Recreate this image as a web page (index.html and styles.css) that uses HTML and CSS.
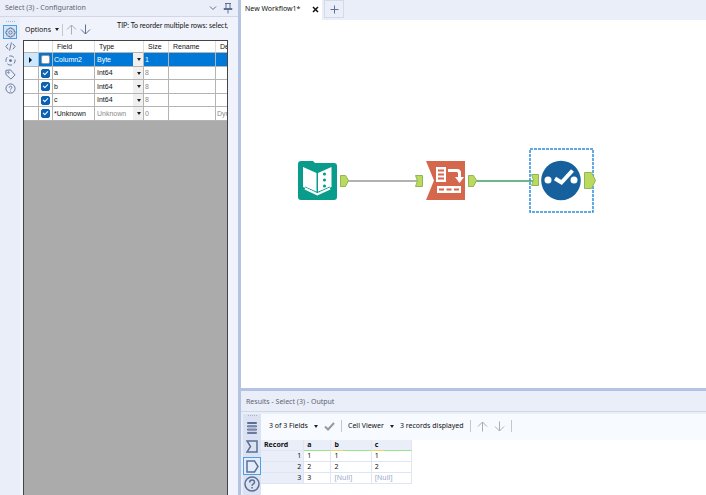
FILE: index.html
```html
<!DOCTYPE html>
<html lang="en">
<head>
    <meta charset="UTF-8">
    <meta name="viewport" content="width=device-width, initial-scale=1.0">
    <title>New Workflow1*</title>
    <link rel="stylesheet" href="styles.css">
</head>
<body>
    <div class="app">
        <aside class="config">
            <header class="config-title">
                <span>Select (3) - Configuration</span>
                <button class="icon-btn" aria-label="Window menu">
                    <svg width="8" height="8" viewBox="0 0 8 8"><path d="M1 2.5l3 3 3-3"/></svg>
                </button>
                <button class="icon-btn" aria-label="Pin">
                    <svg width="10" height="12" viewBox="0 0 10 12"><path d="M2 1.5h6M3 1.5V6M7 1.5V6M1 7.500V6.500h8v1zM5 8v3.5"/></svg>
                </button>
            </header>
            <div class="config-body">
                <nav class="config-nav">
                    <span class="grip"></span>
                    <button class="active" aria-label="Configuration">
                        <svg width="11" height="11" viewBox="0 0 12 12"><path d="M5 1h2l.5 1.4 1.3-.5 1.4 1.4-.6 1.3L11 5v2l-1.4.5.6 1.3-1.4 1.4-1.3-.6L7 11H5l-.5-1.4-1.3.6-1.4-1.4.6-1.3L1 7V5l1.4-.4-.6-1.3 1.4-1.4 1.3.5z"/><circle cx="6" cy="6" r="1.8"/></svg>
                    </button>
                    <button aria-label="XML view">
                        <svg width="11" height="11" viewBox="0 0 12 12"><path d="M3.5 3L1 6l2.5 3M8.5 3L11 6 8.5 9M7 1.5l-2 9"/></svg>
                    </button>
                    <button aria-label="Navigation">
                        <svg width="11" height="11" viewBox="0 0 12 12"><circle cx="6" cy="6" r="5" stroke-dasharray="5.5 2.35" stroke-dashoffset="2"/><circle class="dot" cx="6" cy="6" r="1.5"/></svg>
                    </button>
                    <button aria-label="Annotation">
                        <svg width="11" height="11" viewBox="0 0 12 12"><path d="M1 1.5L6 1l5 5.5L6.5 11 1 6z"/><circle cx="3.8" cy="3.8" r=".8"/></svg>
                    </button>
                    <button aria-label="Help">
                        <svg width="11" height="11" viewBox="0 0 12 12"><circle cx="6" cy="6" r="5"/><path d="M4.5 5c0-2 3-2 3-.2C7.5 6 6 6 6 7.2M6 8.3v1"/></svg>
                    </button>
                </nav>
                <div class="config-main">
                    <div class="options-bar">
                        <button class="menu-btn">Options</button>
                        <span class="bar"></span>
                        <button class="icon-btn dim" aria-label="Move up">
                            <svg width="11" height="11" viewBox="0 0 11 11"><path d="M5.5 10.5V1M1 5.5L5.5 1 10 5.5"/></svg>
                        </button>
                        <button class="icon-btn" aria-label="Move down">
                            <svg width="11" height="11" viewBox="0 0 11 11"><path d="M5.5 .5V10M1 5.5L5.5 10 10 5.5"/></svg>
                        </button>
                        <span class="tip">TIP: To reorder multiple rows: select, right-click</span>
                    </div>
                    <div class="grid-box">
                        <table class="fields">
                            <colgroup>
                                <col class="w-mark"><col class="w-check"><col class="w-field"><col class="w-type"><col class="w-size"><col class="w-rename"><col class="w-desc">
                            </colgroup>
                            <thead>
                                <tr><th></th><th></th><th>Field</th><th>Type</th><th>Size</th><th>Rename</th><th>Description</th></tr>
                            </thead>
                            <tbody>
                                <tr class="selected">
                                    <td class="mark"></td>
                                    <td class="check"><input type="checkbox" aria-label="Column2"></td>
                                    <td>Column2</td>
                                    <td class="type"><div class="pick"><select aria-label="Type of Column2"><option>Byte</option></select></div></td>
                                    <td>1</td><td></td><td></td>
                                </tr>
                                <tr>
                                    <td></td>
                                    <td class="check"><input type="checkbox" aria-label="a" checked></td>
                                    <td>a</td>
                                    <td class="type"><div class="pick"><select aria-label="Type of a"><option>Int64</option></select></div></td>
                                    <td class="muted">8</td><td></td><td></td>
                                </tr>
                                <tr>
                                    <td></td>
                                    <td class="check"><input type="checkbox" aria-label="b" checked></td>
                                    <td>b</td>
                                    <td class="type"><div class="pick"><select aria-label="Type of b"><option>Int64</option></select></div></td>
                                    <td class="muted">8</td><td></td><td></td>
                                </tr>
                                <tr>
                                    <td></td>
                                    <td class="check"><input type="checkbox" aria-label="c" checked></td>
                                    <td>c</td>
                                    <td class="type"><div class="pick"><select aria-label="Type of c"><option>Int64</option></select></div></td>
                                    <td class="muted">8</td><td></td><td></td>
                                </tr>
                                <tr>
                                    <td></td>
                                    <td class="check"><input type="checkbox" aria-label="Unknown" checked></td>
                                    <td>*Unknown</td>
                                    <td class="type muted"><div class="pick"><select aria-label="Type of Unknown"><option>Unknown</option></select></div></td>
                                    <td class="muted">0</td><td></td><td class="muted">Dynamic</td>
                                </tr>
                            </tbody>
                        </table>
                    </div>
                </div>
            </div>
        </aside>

        <main class="work">
            <div class="tabs">
                <div class="tab">
                    <span>New Workflow1*</span>
                    <button class="close" aria-label="Close tab">
                        <svg width="7" height="7" viewBox="0 0 7 7"><path d="M1 1l5 5M6 1L1 6"/></svg>
                    </button>
                </div>
                <button class="new-tab" aria-label="New tab">
                    <svg width="9" height="9" viewBox="0 0 9 9"><path d="M4.5 .5v8M.5 4.5h8"/></svg>
                </button>
            </div>

            <div class="canvas">
                <svg class="wires" width="360" height="200" viewBox="0 0 360 200">
                    <path class="wire" d="M106 161h70"/>
                    <path class="wire live" d="M234 161h58"/>
                </svg>
                <div class="node input-node">
                    <svg width="52" height="40" viewBox="0 0 52 40">
                        <path fill="#0a9c8a" d="M3 0h12l2 2h19q3 0 3 3v31q0 3-3 3H3q-3 0-3-3V3q0-3 3-3z"/>
                        <path fill="#fff" d="M5 6l13.5 6v20L5 26zM20 12l13.5-6v20L20 32z"/>
                        <path fill="none" stroke="#0a9c8a" d="M7 26l12.3 5.5L32 26"/>
                        <path fill="none" stroke="#fff" stroke-width="2" d="M7 27.5l12.3 6L32 27.5"/>
                        <circle fill="#0a9c8a" cx="26.5" cy="13" r="1.6"/><circle fill="#0a9c8a" cx="26.5" cy="19" r="1.6"/><circle fill="#0a9c8a" cx="26.5" cy="25" r="1.6"/>
                        <path class="anchor" d="M42.5 14.5h5l3 5-3 6h-5z"/>
                    </svg>
                </div>
                <div class="node transpose-node">
                    <svg width="64" height="40" viewBox="0 0 64 40">
                        <path class="anchor" d="M1.5 14.5h7v11h-7l2-5.5z"/>
                        <path fill="#d5674c" d="M12 0h39v39H12l8-19.5z"/>
                        <path fill="#fff" d="M22 6h10v15H22zM34 8h9q4 0 4 4v4h3l-4.5 6L41 16h3v-4l-1-1h-9zM23 25h24v7H23z"/>
                        <path fill="none" stroke="#d5674c" stroke-width="2" d="M24 9.5h6M24 13.5h6M24 17.5h6M25 28.5h5M32.5 28.5h5M40 28.5h5"/>
                        <path class="anchor" d="M54.5 14.5h5l3 5-3 6h-5z"/>
                    </svg>
                </div>
                <div class="node select-node">
                    <svg width="68" height="65" viewBox="0 0 68 65">
                        <rect x="1" y="1" width="63" height="63" fill="none" stroke="#2f8fe0" stroke-width="1.5" stroke-dasharray="3 1"/>
                        <path class="anchor" d="M2.5 26.5h7v11h-7l2-5.5z"/>
                        <circle cx="32" cy="32.5" r="19.8" fill="#17609e"/>
                        <circle cx="19" cy="32" r="3.5" fill="#fff"/><circle cx="45" cy="32" r="3.5" fill="#fff"/>
                        <path fill="none" stroke="#fff" stroke-width="4" d="M26 30.5l6.5 4L43.500 22.5"/>
                        <path class="anchor" d="M55.5 24.5h7l4 8-4 8h-7z"/>
                    </svg>
                </div>
            </div>

            <section class="results">
                <header class="results-title">Results - Select (3) - Output</header>
                <div class="results-body">
                    <nav class="results-nav">
                        <span class="grip"></span>
                        <button class="messages" aria-label="Messages">
                            <svg width="12" height="14" viewBox="0 0 12 14"><path d="M1.5 1.5h9v1h-9zM1.5 4.8h9v1h-9zM1.5 8.1h9v1h-9zM1.5 11.4h9v1h-9z"/></svg>
                        </button>
                        <button aria-label="Input anchor">
                            <svg width="12" height="13" viewBox="0 0 12 13"><path d="M1 1h10v11H1l3.5-5.5z"/></svg>
                        </button>
                        <button class="active" aria-label="Output anchor">
                            <svg width="13" height="13" viewBox="0 0 13 13"><path d="M1 1h7.5l3.5 5.5L8.5 12H1z"/></svg>
                        </button>
                        <button aria-label="Help">
                            <svg width="16" height="16" viewBox="0 0 16 16"><circle cx="8" cy="8" r="7"/><path d="M5.7 6.5c0-3.3 4.8-3 4.8-.3C10.5 8 8 7.8 8 9.8M8 11v1.5"/></svg>
                        </button>
                    </nav>
                    <div class="results-main">
                        <div class="results-bar">
                            <button class="menu-btn">3 of 3 Fields</button>
                            <button class="icon-btn tick" aria-label="Apply">
                                <svg width="11" height="9" viewBox="0 0 11 9"><path d="M1 4.5l3 3L10 1"/></svg>
                            </button>
                            <span class="bar"></span>
                            <button class="menu-btn">Cell Viewer</button>
                            <span class="count">3 records displayed</span>
                            <span class="bar"></span>
                            <button class="icon-btn dim" aria-label="Previous">
                                <svg width="11" height="11" viewBox="0 0 11 11"><path d="M5.5 10.5V1M1 5.5L5.5 1 10 5.5"/></svg>
                            </button>
                            <button class="icon-btn dim" aria-label="Next">
                                <svg width="11" height="11" viewBox="0 0 11 11"><path d="M5.5 .5V10M1 5.5L5.5 10 10 5.5"/></svg>
                            </button>
                            <span class="bar"></span>
                        </div>
                        <table class="records">
                            <colgroup><col class="w-record"><col class="w-a"><col class="w-b"><col class="w-b"></colgroup>
                            <thead>
                                <tr><th>Record</th><th class="full">a</th><th class="part">b</th><th class="part">c</th></tr>
                            </thead>
                            <tbody>
                                <tr><th>1</th><td>1</td><td>1</td><td>1</td></tr>
                                <tr><th>2</th><td>2</td><td>2</td><td>2</td></tr>
                                <tr><th>3</th><td>3</td><td class="null">[Null]</td><td class="null">[Null]</td></tr>
                            </tbody>
                        </table>
                    </div>
                </div>
            </section>
        </main>
    </div>
</body>
</html>
```
FILE: styles.css
```css
/* General Styles */
* {
    box-sizing: border-box;
}
body {
    margin: 0;
    font-family: "Noto Sans", "Open Sans", sans-serif;
    font-size: 7px;
    line-height: 10px;
    color: #111;
}
button, select {
    font: inherit;
    color: inherit;
    background: none;
    border: 0;
    padding: 0;
    margin: 0;
}
button {
    display: flex;
    align-items: center;
    justify-content: center;
}
svg {
    display: block;
    fill: none;
    stroke: #5d6f95;
}
table {
    border-collapse: separate;
    border-spacing: 0;
    table-layout: fixed;
}
.app {
    display: flex;
    height: 100vh;
    overflow: hidden;
    background: #eaeef9;
}
.grip {
    width: 9px;
    border-top: 1px dotted #a9b3c8;
}
.bar {
    width: 1px;
    height: 12px;
    background: #c3c7cf;
}
.dim svg {
    stroke: #a8adb6;
}
.menu-btn {
    gap: 4px;
}
.menu-btn::after,
.pick::after {
    content: "";
    border: 2px solid transparent;
    border-top: 3px solid #222;
    border-bottom: 0;
}

/* Configuration panel */
.config {
    display: flex;
    flex-direction: column;
    flex: 0 0 241px;
    min-width: 0;
    border-right: 3px solid #b5c3e3;
}
.config-title {
    display: flex;
    align-items: center;
    gap: 6px;
    height: 17px;
    padding: 0 5px;
    border-bottom: 1px solid #d2d7e3;
    color: #5d6470;
}
.config-title span {
    flex: 1;
}
.config-body {
    display: flex;
    flex: 1;
    min-height: 0;
}
.config-nav {
    display: flex;
    flex-direction: column;
    align-items: center;
    flex: 0 0 20px;
    padding-top: 4px;
}
.config-nav .grip {
    margin-bottom: 3px;
}
.config-nav button {
    width: 14px;
    height: 14px;
}
.config-nav .active {
    border: 1px solid #4ba0e8;
    background: #d3e5f8;
}
.config-nav .dot {
    fill: #5d6f95;
    stroke: none;
}
.config-main {
    display: flex;
    flex-direction: column;
    flex: 1;
    min-width: 0;
    padding: 2px 10px 0 3px;
    background: #f0f3fb;
}
.options-bar {
    display: flex;
    align-items: center;
    gap: 3px;
    height: 21px;
    overflow: hidden;
    padding-left: 2px;
    white-space: nowrap;
}
.options-bar > * {
    flex-shrink: 0;
}
.tip {
    align-self: flex-start;
    margin-left: 23px;
    padding-top: 1px;
    font-family: Lato, Arial, sans-serif;
}
.grid-box {
    flex: 1;
    overflow: hidden;
    border: 1px solid #444;
    border-bottom: 0;
    background: #ababab;
}

/* Fields grid */
.fields {
    width: 244px;
    font-family: "Liberation Sans", Arial, sans-serif;
}
.w-mark { width: 15px; }
.w-check { width: 14px; }
.w-field { width: 42px; }
.w-type { width: 49px; }
.w-size { width: 25px; }
.w-rename { width: 47px; }
.w-desc { width: 52px; }
.fields th,
.fields td {
    height: 14px;
    padding: 0 0 0 1px;
    overflow: hidden;
    white-space: nowrap;
    background: #fff;
    border-right: 1px solid #b4b4b4;
    border-bottom: 1px solid #b4b4b4;
}
.fields th {
    height: 12px;
    padding-left: 4px;
    font-weight: normal;
    text-align: left;
    border-right-color: #ddd;
}
.fields tr:nth-child(even) td {
    height: 13px;
}
.fields .selected td {
    background-color: #0078d7;
    color: #fff;
}
.fields .selected .mark {
    padding-left: 5px;
    background: #cce8ff;
}
.mark::after {
    content: "";
    display: block;
    width: 0;
    border: 3px solid transparent;
    border-left: 3px solid #111;
    border-right: 0;
}
.fields .muted {
    color: #8a8a8a;
}
.fields .check,
.fields .type {
    padding: 0;
}
.check input {
    display: block;
    appearance: none;
    width: 9px;
    height: 9px;
    margin: 0 auto;
    border: 1px solid #999;
    border-radius: 2px;
    background: #fff;
}
.check input:checked {
    border-color: #0863b5;
    background: #0863b5;
}
.check input:checked::after {
    content: "";
    display: block;
    width: 4px;
    height: 2px;
    margin: 1px;
    border-left: 1px solid #fff;
    border-bottom: 1px solid #fff;
    transform: rotate(-45deg);
}
.pick {
    display: flex;
    align-items: center;
    height: 12px;
    padding-left: 2px;
}
.pick select {
    appearance: none;
    flex: 1;
    min-width: 0;
}
.pick::after {
    margin-right: 2px;
}
.fields .type {
    background-image: linear-gradient(#f0f0f0, #f0f0f0);
    background-repeat: no-repeat;
    background-position: right;
    background-size: 10px 100%;
}

/* Workflow area */
.work {
    display: flex;
    flex-direction: column;
    flex: 1;
    min-width: 0;
}
.tabs {
    display: flex;
    height: 20px;
}
.tab {
    display: flex;
    align-items: center;
    justify-content: space-between;
    width: 81px;
    padding: 0 3px 2px 4px;
    background: #fff;
}
.close svg {
    stroke: #111;
    stroke-width: 1.5;
}
.new-tab {
    width: 20px;
    height: 18px;
    margin-left: 2px;
    border: 1px solid #d3daea;
}
.canvas {
    position: relative;
    flex: 1;
    overflow: hidden;
    background: #fff;
}
.wires,
.node {
    position: absolute;
    top: 0;
    left: 0;
}
.wire {
    stroke: #999;
    stroke-width: 1.5;
}
.wire.live {
    stroke: #3d9f62;
}
.input-node {
    top: 141px;
    left: 57px;
}
.transpose-node {
    top: 141px;
    left: 173px;
}
.select-node {
    top: 128px;
    left: 288px;
}
.node svg {
    stroke: none;
}
.node .anchor {
    fill: #b9da5c;
    stroke: #93b558;
}

/* Results */
.results {
    border-top: 3px solid #b5c3e3;
    flex: 0 0 107px;
    display: flex;
    flex-direction: column;
}
.results-title {
    height: 21px;
    padding: 6px 5px;
    border-bottom: 1px solid #d2d7e3;
    color: #5d6470;
}
.results-body {
    display: flex;
    flex: 1;
    padding: 2px 0 0 2px;
}
.results-nav {
    display: flex;
    flex-direction: column;
    align-items: center;
    width: 18px;
    background: #dbe2f1;
}
.results-nav button {
    width: 18px;
    height: 18px;
}
.results-nav .grip {
    margin: 1px 0 3px;
}
.results-nav svg {
    stroke-width: 1.5;
}
.results-nav .messages svg {
    stroke-width: 1;
}
.results-nav .active {
    margin-top: 2px;
    border: 1px solid #4ba0e8;
    background: #e3edfa;
}
.results-main {
    flex: 1;
    min-width: 0;
    background: #fff;
}
.results-bar {
    display: flex;
    align-items: center;
    gap: 6px;
    height: 26px;
    padding: 0 0 2px 8px;
    background: #f7faff;
    white-space: nowrap;
}
.results-bar .menu-btn {
    gap: 6px;
}
.tick svg {
    stroke: #999;
    stroke-width: 2;
}

/* Records table */
.records {
    width: 151px;
}
.w-record { width: 43px; }
.w-a { width: 27px; }
.w-b { width: 40px; }
.records th,
.records td {
    height: 11px;
    padding: 0 3px;
    line-height: 10px;
    text-align: left;
    border-right: 1px solid #dfe5f2;
    border-bottom: 1px solid #dfe5f2;
}
.records th {
    background: #eaeef9;
}
.records tbody th {
    padding-right: 2px;
    font-weight: normal;
    text-align: right;
}
.records .full {
    border-bottom-color: #97e58d;
}
.records .part {
    border-bottom-color: transparent;
    background: linear-gradient(90deg, #f8cf62 30%, #97e58d 30%) bottom / 100% 1px no-repeat border-box #eaeef9;
}
.records .null {
    color: #9aa9c9;
}
```
